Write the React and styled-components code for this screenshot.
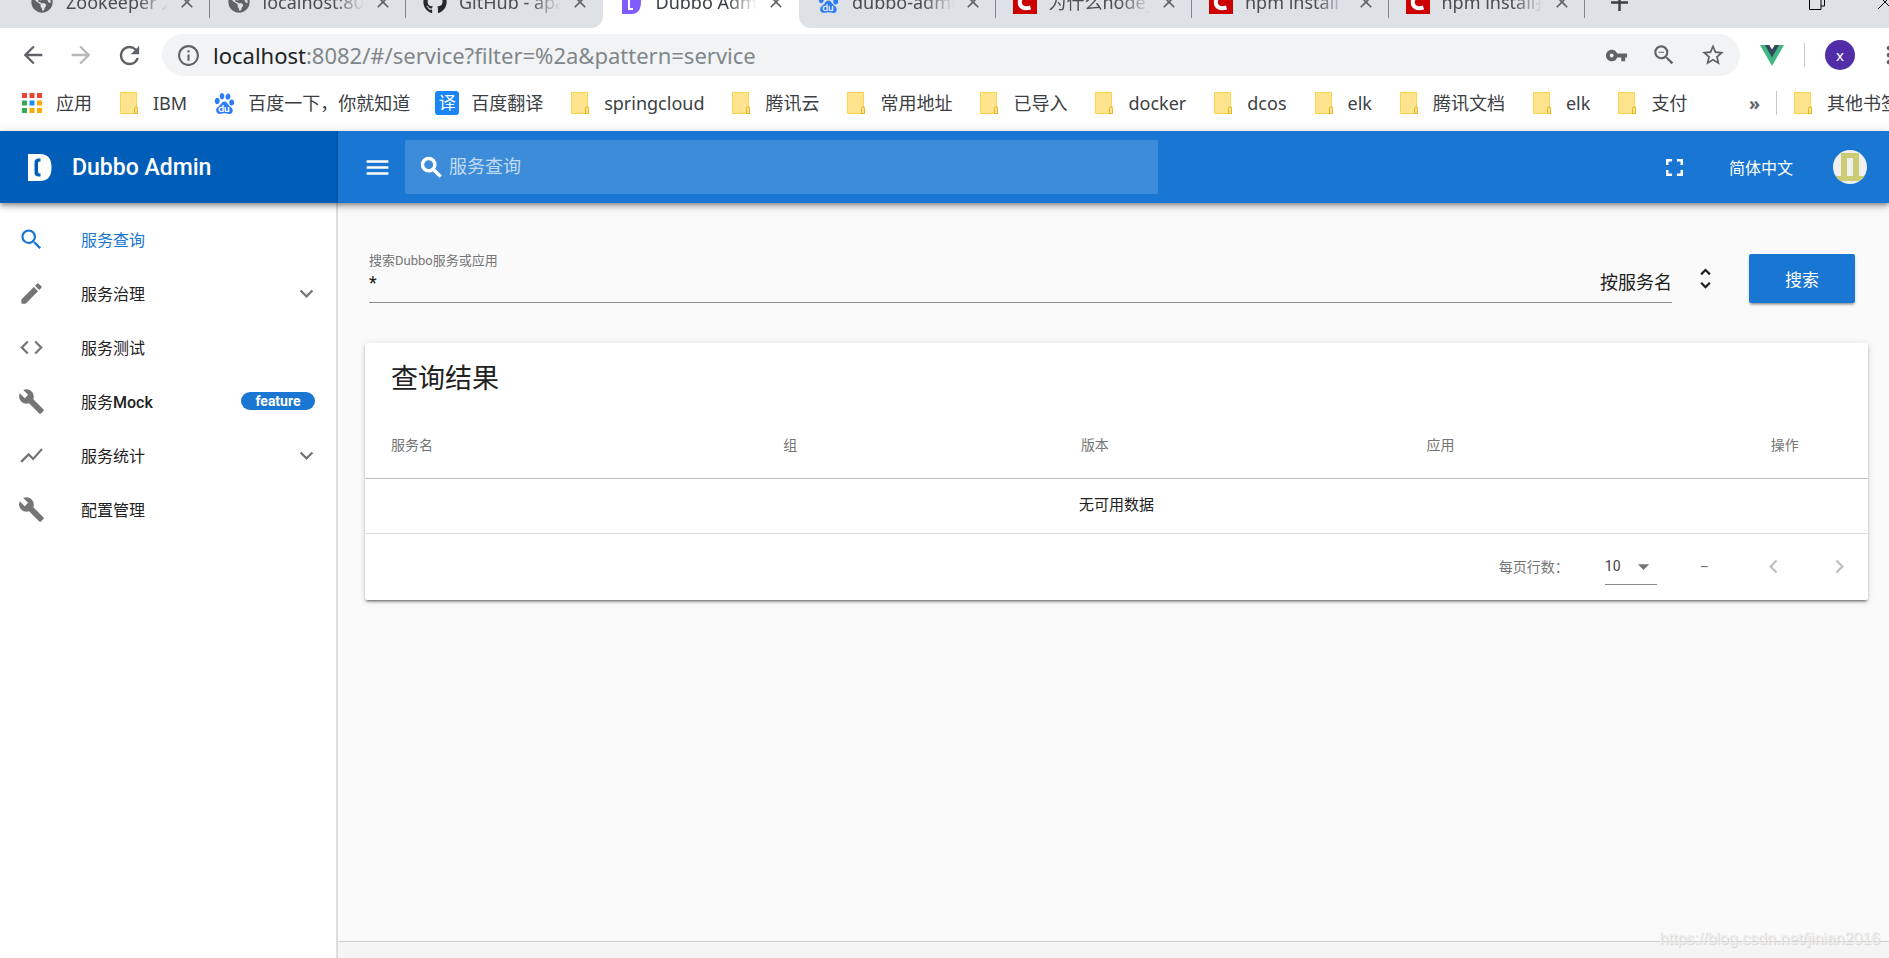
import React, { useState } from "react";
import styled, { createGlobalStyle } from "styled-components";
import {
  MdAdd,
  MdArrowBack,
  MdArrowDropDown,
  MdArrowForward,
  MdBuild,
  MdChevronLeft,
  MdChevronRight,
  MdClose,
  MdCode,
  MdCreate,
  MdExpandMore,
  MdFullscreen,
  MdInfoOutline,
  MdMenu,
  MdMoreVert,
  MdRefresh,
  MdSearch,
  MdShowChart,
  MdStarBorder,
  MdUnfoldMore,
  MdVpnKey,
  MdZoomOut,
} from "react-icons/md";
import { SiBaidu } from "react-icons/si";
import { FaGithub, FaGlobeAmericas } from "react-icons/fa";

const tabs = [
  { icon: "globe", title: "Zookeeper 入门" },
  { icon: "globe", title: "localhost:8080" },
  { icon: "github", title: "GitHub - apache", edge: "right" },
  { icon: "dubbo", title: "Dubbo Admin", active: true },
  { icon: "baidu", title: "dubbo-admin", edge: "left" },
  { icon: "csdn", title: "为什么node_m" },
  { icon: "csdn", title: "npm install" },
  { icon: "csdn", title: "npm install报" },
];

const bookmarks = [
  { icon: "apps", label: "应用" },
  { icon: "folder", label: "IBM" },
  { icon: "baidu", label: "百度一下，你就知道" },
  { icon: "fanyi", label: "百度翻译" },
  { icon: "folder", label: "springcloud" },
  { icon: "folder", label: "腾讯云" },
  { icon: "folder", label: "常用地址" },
  { icon: "folder", label: "已导入" },
  { icon: "folder", label: "docker" },
  { icon: "folder", label: "dcos" },
  { icon: "folder", label: "elk" },
  { icon: "folder", label: "腾讯文档" },
  { icon: "folder", label: "elk" },
  { icon: "folder", label: "支付" },
];

const menu = [
  { icon: MdSearch, title: "服务查询", active: true },
  { icon: MdCreate, title: "服务治理", group: true },
  { icon: MdCode, title: "服务测试" },
  { icon: MdBuild, title: "服务", suffix: "Mock", badge: "feature" },
  { icon: MdShowChart, title: "服务统计", group: true },
  { icon: MdBuild, title: "配置管理" },
];

const columns = [
  { title: "服务名", width: "26.1%" },
  { title: "组", width: "19.8%" },
  { title: "版本", width: "23%" },
  { title: "应用", width: "22.9%" },
  { title: "操作", width: "8.2%" },
];

const appColors = [
  "#ea4335", "#ea4335", "#ea4335",
  "#34a853", "#1a8cff", "#fbab05",
  "#34a853", "#fbab05", "#fbab05",
];

const SiteIcon = ({ name }) => {
  switch (name) {
    case "globe":
      return <FaGlobeAmericas size={22} color="#5f6368" />;
    case "github":
      return <FaGithub size={24} color="#24292e" />;
    case "baidu":
      return <SiBaidu size={21} color="#2f7df6" />;
    case "dubbo":
      return (
        <svg width="22" height="24" viewBox="0 0 22 24">
          <path d="M1 0h10c6 0 9 5 9 12s-3 12-9 12H1z" fill="#7f5cff" />
          <path d="M12 4H8v15h4" fill="none" stroke="#fff" strokeWidth="2" />
        </svg>
      );
    case "csdn":
      return (
        <svg width="24" height="24" viewBox="0 0 24 24">
          <rect width="24" height="24" fill="#c00" />
          <path
            d="M18 7.500C12 5 7 7 6.800 12S11 19.500 17.500 17.500"
            fill="none"
            stroke="#fff"
            strokeWidth="4"
          />
        </svg>
      );
    case "apps":
      return (
        <svg width="20" height="20" viewBox="0 0 20 20">
          {appColors.map((fill, i) => (
            <rect
              key={i}
              x={(i % 3) * 7.5}
              y={Math.floor(i / 3) * 7.5}
              width="5"
              height="5"
              fill={fill}
            />
          ))}
        </svg>
      );
    case "fanyi":
      return <FanyiIcon>译</FanyiIcon>;
    default:
      return (
        <svg width="18" height="22" viewBox="0 0 18 22">
          <path
            d="M.5 .5h16v14.500h1v6.500H.5z"
            fill="#ffe48f"
            stroke="#fbd24b"
          />
          <path
            d="M14.500 21.500v-5q0-1.500 1.500-1.500t1.500 1.500v5z"
            fill="#ffe48f"
            stroke="#e6b422"
          />
        </svg>
      );
  }
};

const VueIcon = () => (
  <svg width="24" height="21" viewBox="0 0 24 21">
    <path d="M0 0h24L12 21z" fill="#41b883" />
    <path d="M4.800 0h14.400L12 12.500z" fill="#35495e" />
    <path d="M9.200 0h5.600L12 4.500z" fill="#fff" />
  </svg>
);

const DubboLogo = () => (
  <svg width="24" height="27" viewBox="0 0 24 27">
    <path d="M0 0h12c8 0 11.500 5 11.500 13.500S20 27 12 27H0z" fill="#fff" />
    <path
      d="M12.500 4.500C8 4 6.500 5.500 6.500 9v9c0 4 2 5 6 4.500v-3c-2 0-2.500-.5-2.500-2.500V10c0-2 .5-2.500 2.500-2.500z"
      fill="#005eb8"
    />
  </svg>
);

const Identicon = () => (
  <svg width="34" height="34" viewBox="0 0 34 34">
    <clipPath id="round">
      <circle cx="17" cy="17" r="17" />
    </clipPath>
    <g clipPath="url(#round)">
      <rect width="34" height="34" fill="#f0f0f0" />
      <path d="M8 3h18v23h8v5H0v-5h8z" fill="#cbcc73" />
      <path d="M14 8h6v18h-6z" fill="#f0f0f0" />
    </g>
  </svg>
);

const TabStrip = () => (
  <Strip>
    <Tabs>
      {tabs.map((tab, i) => (
        <Tab key={i} $active={tab.active} $edge={tab.edge}>
          <TabIcon>
            <SiteIcon name={tab.icon} />
          </TabIcon>
          <TabTitle>{tab.title}</TabTitle>
          <TabClose aria-label="关闭">
            <MdClose size={20} />
          </TabClose>
        </Tab>
      ))}
    </Tabs>
    <StripEnd>
      <PlainButton aria-label="新标签页">
        <MdAdd size={29} color="#3c4043" />
      </PlainButton>
      <WindowButtons>
        <svg width="16" height="16" viewBox="0 0 16 16">
          <path
            d="M.5 3.500h11.500v12H.5zM3.500 3.500v-3h12v11.500h-3.500"
            fill="none"
            stroke="#000"
          />
        </svg>
        <svg width="16" height="16" viewBox="0 0 16 16">
          <path d="M1 1l14 14M15 1L1 15" stroke="#000" />
        </svg>
      </WindowButtons>
    </StripEnd>
  </Strip>
);

const AddressBar = () => (
  <Toolbar>
    <NavButtons>
      <PlainButton aria-label="后退">
        <MdArrowBack size={28} />
      </PlainButton>
      <PlainButton aria-label="前进" disabled>
        <MdArrowForward size={28} />
      </PlainButton>
      <PlainButton aria-label="刷新">
        <MdRefresh size={29} />
      </PlainButton>
    </NavButtons>
    <Omnibox>
      <MdInfoOutline size={25} />
      <Url>
        <b>localhost</b>:8082/#/service?filter=%2a&amp;pattern=service
      </Url>
      <OmniboxIcons>
        <MdVpnKey size={23} />
        <MdZoomOut size={26} />
        <MdStarBorder size={26} />
      </OmniboxIcons>
    </Omnibox>
    <Extensions>
      <VueIcon />
      <Divider />
      <Profile aria-label="个人资料">x</Profile>
    </Extensions>
    <MdMoreVert size={28} />
  </Toolbar>
);

const BookmarkBar = () => (
  <Bookmarks>
    {bookmarks.map((item, i) => (
      <Bookmark key={i} href="#">
        <BookmarkIcon>
          <SiteIcon name={item.icon} />
        </BookmarkIcon>
        {item.label}
      </Bookmark>
    ))}
    <BookmarksEnd>
      <More>»</More>
      <Divider />
      <Bookmark href="#">
        <BookmarkIcon>
          <SiteIcon name="folder" />
        </BookmarkIcon>
        其他书签
      </Bookmark>
    </BookmarksEnd>
  </Bookmarks>
);

const Sidebar = () => (
  <Drawer>
    {menu.map(({ icon: Icon, title, suffix, active, group, badge }, i) => (
      <MenuItem key={i} href="#" $active={active}>
        <Icon size={27} />
        <MenuTitle>
          {title}
          {suffix && <b>{suffix}</b>}
        </MenuTitle>
        {group && <MdExpandMore size={27} />}
        {badge && <Badge>{badge}</Badge>}
      </MenuItem>
    ))}
  </Drawer>
);

const SearchForm = () => {
  const [filter, setFilter] = useState("*");

  return (
    <Form onSubmit={(e) => e.preventDefault()}>
      <Field>
        <label htmlFor="filter">搜索Dubbo服务或应用</label>
        <FieldRow>
          <input
            id="filter"
            value={filter}
            onChange={(e) => setFilter(e.target.value)}
          />
          <span>按服务名</span>
        </FieldRow>
      </Field>
      <PlainButton type="button" aria-label="查询方式">
        <MdUnfoldMore size={27} color="#212121" />
      </PlainButton>
      <SubmitButton type="submit">搜索</SubmitButton>
    </Form>
  );
};

const Results = () => (
  <Card>
    <CardTitle>查询结果</CardTitle>
    <Table>
      <thead>
        <tr>
          {columns.map((col) => (
            <Th key={col.title} $width={col.width}>
              {col.title}
            </Th>
          ))}
        </tr>
      </thead>
      <tbody>
        <tr>
          <EmptyCell colSpan={columns.length}>无可用数据</EmptyCell>
        </tr>
      </tbody>
    </Table>
    <Pagination>
      <label htmlFor="rows">每页行数：</label>
      <RowsSelect>
        <select id="rows" defaultValue="10">
          <option>10</option>
          <option>25</option>
        </select>
        <MdArrowDropDown size={27} />
      </RowsSelect>
      <PageRange>–</PageRange>
      <PageButton disabled aria-label="上一页">
        <MdChevronLeft size={27} />
      </PageButton>
      <PageButton disabled aria-label="下一页">
        <MdChevronRight size={27} />
      </PageButton>
    </Pagination>
  </Card>
);

const App = () => (
  <Window>
    <GlobalStyle />
    <TabStrip />
    <AddressBar />
    <BookmarkBar />
    <Header>
      <Brand>
        <DubboLogo />
        Dubbo Admin
      </Brand>
      <AppBar>
        <PlainButton aria-label="菜单">
          <MdMenu size={29} />
        </PlainButton>
        <HeaderSearch>
          <MdSearch size={27} />
          <input placeholder="服务查询" aria-label="服务查询" />
        </HeaderSearch>
        <HeaderActions>
          <PlainButton aria-label="全屏">
            <MdFullscreen size={29} />
          </PlainButton>
          <LanguageButton>简体中文</LanguageButton>
          <PlainButton aria-label="用户">
            <Identicon />
          </PlainButton>
        </HeaderActions>
      </AppBar>
    </Header>
    <Body>
      <Sidebar />
      <Content>
        <SearchForm />
        <Results />
        <Footer />
      </Content>
    </Body>
    <Watermark>https://blog.csdn.net/jinian2016</Watermark>
  </Window>
);

export default App;

const GlobalStyle = createGlobalStyle`
  * {
    box-sizing: border-box;
  }
  body {
    margin: 0;
    overflow: hidden;
    background: #fff;
    color: #212121;
    font-family: Roboto, "Noto Sans CJK SC", sans-serif;
  }
  svg {
    display: block;
    flex-shrink: 0;
  }
  button, input, select {
    font: inherit;
    color: inherit;
    background: none;
    border: 0;
    padding: 0;
    outline: 0;
  }
  a {
    color: inherit;
    text-decoration: none;
  }
`;

const Window = styled.div`
  position: relative;
  display: flex;
  flex-direction: column;
  height: 100vh;
  overflow: hidden;
`;

const PlainButton = styled.button`
  display: flex;
  align-items: center;
  &:disabled {
    opacity: 0.45;
  }
`;

const Divider = styled.span`
  flex-shrink: 0;
  width: 1px;
  height: 24px;
  background: #c4c7cc;
`;

const Strip = styled.div`
  display: flex;
  align-items: flex-end;
  flex-shrink: 0;
  height: 28px;
  overflow: hidden;
  font-family: "Noto Sans", "Noto Sans CJK SC", sans-serif;
`;

const Tabs = styled.div`
  display: flex;
  flex: 1;
  min-width: 0;
  &::before {
    content: "";
    width: 13px;
    background: #dee1e6;
  }
`;

const Tab = styled.div`
  flex: 1 1 0;
  min-width: 0;
  display: flex;
  align-items: center;
  height: 52px;
  padding: 0 12px 0 17px;
  color: ${(p) => (p.$active ? "#3c4043" : "#4a4d51")};
  background: ${(p) => (p.$active ? "#fff" : "#dee1e6")};
  border-radius: ${(p) =>
    p.$edge === "right" ? "0 0 12px 0" : p.$edge === "left" ? "0 0 0 12px" : "0"};
  &::after {
    content: "";
    width: 1px;
    height: 31px;
    margin-right: -12px;
    margin-left: 12px;
    background: ${(p) =>
      p.$active || p.$edge === "right" ? "transparent" : "#80868b"};
  }
`;

const TabIcon = styled.span`
  display: flex;
  justify-content: center;
  width: 24px;
  margin-right: 12px;
`;

const TabTitle = styled.span`
  flex: 1;
  min-width: 0;
  overflow: hidden;
  white-space: nowrap;
  font-size: 18px;
  line-height: 28px;
  mask-image: linear-gradient(to right, #000 70%, transparent);
`;

const TabClose = styled.button`
  margin-left: 9px;
  color: #5f6368;
`;

const StripEnd = styled.div`
  display: flex;
  align-items: center;
  justify-content: space-between;
  flex-shrink: 0;
  width: 304px;
  height: 52px;
  padding-left: 20px;
  background: #dee1e6;
`;

const WindowButtons = styled.div`
  display: flex;
  gap: 52px;
  margin-right: -4px;
`;

const Toolbar = styled.div`
  display: flex;
  align-items: center;
  flex-shrink: 0;
  height: 54px;
  margin-right: -14px;
  color: #5f6368;
  font-family: "Noto Sans", "Noto Sans CJK SC", sans-serif;
`;

const NavButtons = styled.div`
  display: flex;
  gap: 20px;
  padding: 0 18px 0 19px;
`;

const Omnibox = styled.div`
  flex: 1;
  display: flex;
  align-items: center;
  height: 42px;
  padding: 0 14px;
  border-radius: 21px;
  background: #f1f3f4;
`;

const Url = styled.span`
  flex: 1;
  margin-left: 12px;
  color: #80868b;
  font-size: 22px;
  line-height: 28px;
  b {
    color: #202124;
    font-weight: 400;
  }
`;

const OmniboxIcons = styled.div`
  display: flex;
  align-items: center;
  gap: 23px;
`;

const Extensions = styled.div`
  display: flex;
  align-items: center;
  gap: 20px;
  padding: 0 20px 0 20px;
`;

const Profile = styled.button`
  width: 30px;
  height: 30px;
  border-radius: 50%;
  background: #512da8;
  color: #fff;
  font-size: 15px;
  line-height: 28px;
`;

const Bookmarks = styled.div`
  display: flex;
  align-items: center;
  gap: 27px;
  flex-shrink: 0;
  height: 49px;
  padding: 0 0 7px 22px;
  color: #3c4043;
  font-family: "Noto Sans", "Noto Sans CJK SC", sans-serif;
  font-size: 18px;
  line-height: 28px;
  white-space: nowrap;
`;

const Bookmark = styled.a`
  display: flex;
  align-items: center;
  gap: 14px;
`;

const BookmarkIcon = styled.span`
  display: flex;
  justify-content: center;
  flex-shrink: 0;
  width: 20px;
`;

const BookmarksEnd = styled.div`
  display: flex;
  align-items: center;
  gap: 16px;
  width: 140px;
  margin-left: auto;
  overflow: hidden;
`;

const More = styled.span`
  color: #5f6368;
  font-weight: 700;
`;

const FanyiIcon = styled.span`
  flex-shrink: 0;
  width: 24px;
  height: 24px;
  border-radius: 3px;
  background: #1a86f8;
  color: #fff;
  font-size: 17px;
  line-height: 23px;
  text-align: center;
`;

const Header = styled.header`
  position: relative;
  z-index: 1;
  display: flex;
  flex-shrink: 0;
  height: 72px;
  color: #fff;
  box-shadow: 0 2px 4px -1px rgba(0, 0, 0, 0.3), 0 4px 6px rgba(0, 0, 0, 0.2),
    0 1px 11px rgba(0, 0, 0, 0.12);
`;

const Brand = styled.div`
  display: flex;
  align-items: center;
  gap: 20px;
  width: 338px;
  padding-left: 28px;
  border-right: 2px solid #0054a4;
  background: #005eb8;
  font-size: 23px;
  font-weight: 500;
`;

const AppBar = styled.div`
  flex: 1;
  display: flex;
  align-items: center;
  padding: 0 22px 0 25px;
  background: #1976d2;
`;

const HeaderSearch = styled.div`
  flex: 1;
  display: flex;
  align-items: center;
  gap: 4px;
  max-width: 753px;
  height: 54px;
  margin-left: 13px;
  padding: 0 13px;
  border-radius: 2px;
  background: rgba(255, 255, 255, 0.16);
  path:last-child {
    stroke: #fff;
    stroke-width: 1;
  }
  input {
    flex: 1;
    font-size: 18px;
    line-height: 28px;
  }
  input::placeholder {
    color: rgba(255, 255, 255, 0.7);
  }
`;

const HeaderActions = styled.div`
  display: flex;
  align-items: center;
  gap: 40px;
  margin-left: auto;
`;

const LanguageButton = styled.button`
  font-size: 16px;
`;

const Body = styled.div`
  flex: 1;
  display: flex;
  min-height: 0;
`;

const Drawer = styled.nav`
  width: 338px;
  padding-top: 9px;
  border-right: 2px solid #dedede;
  background: #fff;
`;

const MenuItem = styled.a`
  display: flex;
  align-items: center;
  height: 54px;
  padding: 0 16px 0 18px;
  color: ${(p) => (p.$active ? "#1976d2" : "#212121")};
  font-size: 16px;
  svg {
    color: ${(p) => (p.$active ? "#1976d2" : "#757575")};
  }
`;

const MenuTitle = styled.span`
  flex: 1;
  margin-left: 36px;
  b {
    font-weight: 500;
  }
`;

const Badge = styled.span`
  width: 74px;
  height: 18px;
  margin-right: 5px;
  border-radius: 9px;
  background: #1976d2;
  color: #fff;
  font-size: 14px;
  font-weight: 700;
  line-height: 18px;
  text-align: center;
`;

const Content = styled.main`
  flex: 1;
  display: flex;
  flex-direction: column;
  background: #fafafa;
`;

const Form = styled.form`
  display: flex;
  align-items: center;
  gap: 20px;
  padding: 50px 34px 0 31px;
`;

const Field = styled.div`
  flex: 1;
  border-bottom: 1px solid #8c8c8c;
  label {
    display: block;
    color: #757575;
    font-size: 13px;
    line-height: 16px;
  }
`;

const FieldRow = styled.div`
  display: flex;
  height: 33px;
  font-size: 18px;
  line-height: 28px;
  input {
    flex: 1;
    height: 28px;
  }
`;

const SubmitButton = styled.button`
  width: 106px;
  height: 49px;
  margin-left: 10px;
  border-radius: 2px;
  background: #1976d2;
  color: #fff;
  font-size: 17px;
  box-shadow: 0 3px 2px -2px rgba(0, 0, 0, 0.3), 0 2px 3px rgba(0, 0, 0, 0.2);
`;

const Card = styled.section`
  margin: 40px 21px 0 27px;
  border-radius: 2px;
  background: #fff;
  box-shadow: 0 3px 2px -2px rgba(0, 0, 0, 0.4), 0 2px 3px rgba(0, 0, 0, 0.2),
    0 1px 6px rgba(0, 0, 0, 0.12);
`;

const CardTitle = styled.h2`
  margin: 0;
  padding: 18px 26px;
  font-size: 27px;
  font-weight: 400;
  line-height: 36px;
`;

const Table = styled.table`
  width: 100%;
  table-layout: fixed;
  border-collapse: collapse;
`;

const Th = styled.th`
  width: ${(p) => p.$width};
  height: 63px;
  padding: 0 0 4px 26px;
  border-bottom: 1px solid #bdbdbd;
  color: #757575;
  font-size: 14px;
  font-weight: 400;
  text-align: left;
`;

const EmptyCell = styled.td`
  height: 55px;
  padding: 0 0 4px;
  border-bottom: 1px solid #dedede;
  font-size: 15px;
  text-align: center;
`;

const Pagination = styled.div`
  display: flex;
  align-items: center;
  justify-content: flex-end;
  height: 66px;
  padding-right: 2px;
  color: #757575;
  font-size: 14px;
  label {
    line-height: 18px;
  }
`;

const RowsSelect = styled.div`
  display: flex;
  align-items: center;
  width: 52px;
  height: 36px;
  margin-left: 36px;
  border-bottom: 1px solid #8c8c8c;
  select {
    width: 25px;
    color: #424242;
    font-size: 14px;
    appearance: none;
  }
`;

const PageRange = styled.span`
  margin: 0 37px 0 43px;
`;

const PageButton = styled(PlainButton)`
  justify-content: center;
  width: 54px;
  color: #757575;
  & + & {
    margin-left: 12px;
  }
`;

const Footer = styled.footer`
  height: 17px;
  margin-top: auto;
  border-top: 1px solid #cfcfcf;
  background: #f5f5f5;
`;

const Watermark = styled.div`
  position: absolute;
  z-index: 2;
  right: 9px;
  bottom: 8px;
  color: #efefef;
  font-family: "Liberation Sans", sans-serif;
  font-size: 16px;
  line-height: 22px;
  text-shadow: 1px 1px 1px #d4d4d4;
`;
